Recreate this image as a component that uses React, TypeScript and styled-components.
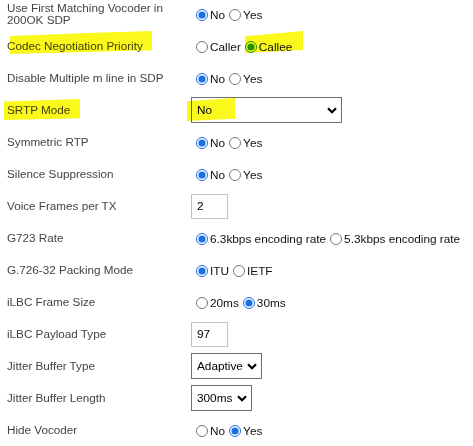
import React from "react";
import styled, { createGlobalStyle } from "styled-components";

const GlobalStyle = createGlobalStyle`
  html, body {
    margin: 0;
    padding: 0;
    background: #ffffff;
  }
  body {
    font-family: "Liberation Sans", Arial, sans-serif;
    font-size: 12px;
  }
`;

type Opt = { label: string; checked?: boolean };

type Field =
  | { label: string; kind: "radio"; options: Opt[]; accent?: string }
  | { label: string; kind: "select"; value: string; width: number }
  | { label: string; kind: "text"; value: string };

const fields: Field[] = [
  { label: "Use First Matching Vocoder in 200OK SDP", kind: "radio", options: [{ label: "No", checked: true }, { label: "Yes" }] },
  { label: "Codec Negotiation Priority", kind: "radio", accent: "#1e9a22", options: [{ label: "Caller" }, { label: "Callee", checked: true }] },
  { label: "Disable Multiple m line in SDP", kind: "radio", options: [{ label: "No", checked: true }, { label: "Yes" }] },
  { label: "SRTP Mode", kind: "select", value: "No", width: 151 },
  { label: "Symmetric RTP", kind: "radio", options: [{ label: "No", checked: true }, { label: "Yes" }] },
  { label: "Silence Suppression", kind: "radio", options: [{ label: "No", checked: true }, { label: "Yes" }] },
  { label: "Voice Frames per TX", kind: "text", value: "2" },
  { label: "G723 Rate", kind: "radio", options: [{ label: "6.3kbps encoding rate", checked: true }, { label: "5.3kbps encoding rate" }] },
  { label: "G.726-32 Packing Mode", kind: "radio", options: [{ label: "ITU", checked: true }, { label: "IETF" }] },
  { label: "iLBC Frame Size", kind: "radio", options: [{ label: "20ms" }, { label: "30ms", checked: true }] },
  { label: "iLBC Payload Type", kind: "text", value: "97" },
  { label: "Jitter Buffer Type", kind: "select", value: "Adaptive", width: 71 },
  { label: "Jitter Buffer Length", kind: "select", value: "300ms", width: 61 },
  { label: "Hide Vocoder", kind: "radio", options: [{ label: "No" }, { label: "Yes", checked: true }] },
];

// marker strokes drawn over the screenshot, relative to their row
const marks: Record<number, { left: number; top: number; width: number; height: number; clip: string }[]> = {
  1: [
    { left: 10, top: 1, width: 142, height: 23, clip: "polygon(0 22%, 60% 8%, 100% 0, 100% 84%, 40% 94%, 0 100%)" },
    { left: 245, top: 1, width: 58, height: 22, clip: "polygon(0 24%, 100% 0, 100% 86%, 0 100%)" },
  ],
  3: [
    { left: 4, top: 4, width: 76, height: 22, clip: "polygon(0 16%, 100% 4%, 100% 92%, 0 100%)" },
    { left: 187, top: 4, width: 48, height: 23, clip: "polygon(0 14%, 100% 0, 100% 90%, 0 100%)" },
  ],
};

export default function App() {
  return (
    <>
      <GlobalStyle />
      <Form>
        {fields.map((f, i) => (
          <Row key={f.label}>
            <Label>{f.label}</Label>
            <Value>
              {f.kind === "radio" && (
                <RadioGroup>
                  {f.options.map((o) => (
                    <Option key={o.label}>
                      <Radio
                        type="radio"
                        name={`r${i}`}
                        defaultChecked={!!o.checked}
                        $accent={f.accent ?? "#1a6fe3"}
                      />
                      {o.label}
                    </Option>
                  ))}
                </RadioGroup>
              )}
              {f.kind === "select" && (
                <SelectBox $width={f.width}>
                  <Select defaultValue={f.value}>
                    <option>{f.value}</option>
                  </Select>
                  <Chevron width="10" height="7" viewBox="0 0 10 7">
                    <path d="M1 1.2 L5 5.2 L9 1.2" fill="none" stroke="#000" strokeWidth="2.2" />
                  </Chevron>
                </SelectBox>
              )}
              {f.kind === "text" && <TextInput type="text" defaultValue={f.value} />}
            </Value>
            {(marks[i] ?? []).map((m, k) => (
              <Mark key={k} $left={m.left} $top={m.top} $width={m.width} $height={m.height} $clip={m.clip} />
            ))}
          </Row>
        ))}
      </Form>
    </>
  );
}

const Form = styled.div`
  margin-top: -2px;
  width: 473px;
`;

const Row = styled.div`
  position: relative;
  display: grid;
  grid-template-columns: 184px 1fr;
  align-items: center;
  height: 32px;
  padding-left: 7px;
`;

const Label = styled.div`
  max-width: 170px;
  color: #444;
  font-size: 11.7px;
  line-height: 12px;
`;

const Value = styled.div`
  display: flex;
  align-items: center;
  color: #111;
`;

const RadioGroup = styled.div`
  display: flex;
  align-items: center;
  gap: 4px;
  padding-left: 5px;
  padding-top: 1px;
`;

const Option = styled.label`
  display: inline-flex;
  align-items: center;
  gap: 2px;
  font-size: 11.8px;
  color: #111;
`;

const Radio = styled.input<{ $accent: string }>`
  width: 12px;
  height: 12px;
  margin: 0;
  accent-color: ${(p) => p.$accent};
`;

const SelectBox = styled.div<{ $width: number }>`
  position: relative;
  width: ${(p) => p.$width}px;
  height: 26px;
`;

const Select = styled.select`
  appearance: none;
  -webkit-appearance: none;
  box-sizing: border-box;
  width: 100%;
  height: 100%;
  margin: 0;
  padding: 0 14px 0 5px;
  border: 1px solid #6f6f6f;
  border-radius: 0;
  background: #fff;
  color: #000;
  font-family: "Liberation Sans", Arial, sans-serif;
  font-size: 11.8px;
  outline: none;
`;

const Chevron = styled.svg`
  position: absolute;
  right: 5px;
  top: 10px;
  pointer-events: none;
`;

const TextInput = styled.input`
  box-sizing: border-box;
  width: 37px;
  height: 25px;
  margin: 0;
  padding: 0 5px;
  border: 1px solid #c2c2c2;
  border-radius: 0;
  color: #000;
  font-family: "Liberation Sans", Arial, sans-serif;
  font-size: 11.8px;
  outline: none;
`;

const Mark = styled.div<{ $left: number; $top: number; $width: number; $height: number; $clip: string }>`
  position: absolute;
  left: ${(p) => p.$left}px;
  top: ${(p) => p.$top}px;
  width: ${(p) => p.$width}px;
  height: ${(p) => p.$height}px;
  background: #fbf81c;
  mix-blend-mode: multiply;
  clip-path: ${(p) => p.$clip};
  pointer-events: none;
`;
